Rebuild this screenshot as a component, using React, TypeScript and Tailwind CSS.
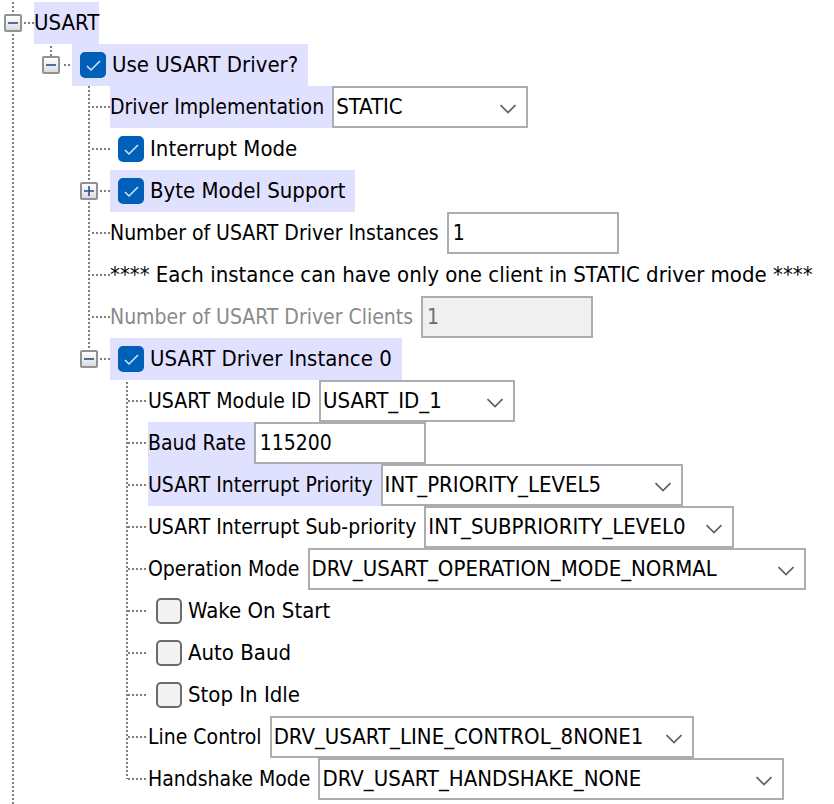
import { ReactNode } from 'react';

const LINE_V =
  'w-0.5 bg-fixed bg-[repeating-linear-gradient(to_bottom,transparent_0px,transparent_2px,#808080_2px,#808080_4px)]';
const LINE_H =
  'h-0.5 bg-fixed bg-[repeating-linear-gradient(to_right,#808080_0px,#808080_2px,transparent_2px,transparent_4px)]';

function Toggle({ open, name }: { open: boolean; name: string }) {
  return (
    <button
      type="button"
      aria-label={name}
      aria-expanded={open}
      className="flex size-[18px] shrink-0 items-center justify-center border-2 border-[#919191] bg-linear-to-b from-white to-[#dcdcdc] rounded-xs"
    >
      <svg viewBox="0 0 14 14" className="size-3.5 shrink-0" aria-hidden="true">
        <path d={open ? 'M2 7H12' : 'M2 7H12M7 2V12'} stroke="#2b4a9b" strokeWidth="1.6" fill="none" />
      </svg>
    </button>
  );
}

type Tail = 'through' | 'end';

function Branch({ tail, toggle }: { tail: Tail; toggle?: ReactNode }) {
  return (
    <div className="flex w-[34px] shrink-0 items-stretch">
      <div className="flex w-[26px] shrink-0 flex-col items-center">
        <div className={`flex-1 ${LINE_V}`} />
        {toggle}
        <div className={`flex-1 ${tail === 'end' ? 'w-0.5' : LINE_V}`} />
      </div>
      <div className={`flex-1 self-center ${toggle ? '-ml-0.5' : '-ml-3'} ${LINE_H}`} />
    </div>
  );
}

function Spacer({ line }: { line?: boolean }) {
  return (
    <div className="flex w-[38px] shrink-0">
      <div className="flex w-[26px] justify-center">{line && <div className={LINE_V} />}</div>
    </div>
  );
}

function Row({ depth, tail = 'through', toggle, children }: { depth: number; tail?: Tail; toggle?: ReactNode; children: ReactNode }) {
  return (
    <li className="flex h-[42px]">
      {depth > 0 && <Spacer line />}
      {depth > 1 && <Spacer />}
      {depth > 2 && <Spacer />}
      <Branch tail={tail} toggle={toggle} />
      {children}
    </li>
  );
}

function Check({ id, label, checked, lit }: { id: string; label: string; checked?: boolean; lit?: boolean }) {
  return (
    <div className={`flex items-center gap-1.5 pl-2 pr-2.5 ${lit ? 'bg-[#e0e0ff]' : ''}`}>
      <span className="grid">
        <input
          id={id}
          type="checkbox"
          defaultChecked={checked}
          className="peer col-start-1 row-start-1 size-[26px] appearance-none rounded-[5px] border-2 border-[#6b6b6b] bg-[#f3f3f3] checked:border-[#005fb8] checked:bg-[#005fb8]"
        />
        <svg viewBox="0 0 26 26" className="pointer-events-none col-start-1 row-start-1 hidden size-[26px] peer-checked:block" aria-hidden="true">
          <path d="M7 14L11 18L20 9" stroke="#d6e8f8" strokeWidth="1.5" fill="none" />
        </svg>
      </span>
      <label htmlFor={id}>{label}</label>
    </div>
  );
}

function FieldLabel({ id, label, lit, dim }: { id: string; label: string; lit?: boolean; dim?: boolean }) {
  return (
    <label htmlFor={id} className={`flex items-center pr-2 text-[21px] leading-9 ${lit ? 'bg-[#e0e0ff]' : ''} ${dim ? 'text-[#8a8a8a]' : ''}`}>
      {label}
    </label>
  );
}

function Text({ id, label, value, lit, disabled }: { id: string; label: string; value: string; lit?: boolean; disabled?: boolean }) {
  return (
    <>
      <FieldLabel id={id} label={label} lit={lit} dim={disabled} />
      <input
        id={id}
        type="text"
        defaultValue={value}
        disabled={disabled}
        className="w-[172px] border-2 border-[#abadb3] bg-white px-1 text-[21px] disabled:bg-[#f0f0f0] disabled:text-[#6d6d6d]"
      />
    </>
  );
}

function Choice({ id, label, value, width, lit }: { id: string; label: string; value: string; width: string; lit?: boolean }) {
  return (
    <>
      <FieldLabel id={id} label={label} lit={lit} />
      <span className={`grid ${width}`}>
        <select id={id} defaultValue={value} className="col-start-1 row-start-1 w-full appearance-none border-2 border-[#abadb3] bg-white px-0.5">
          <option>{value}</option>
        </select>
        <svg viewBox="0 0 16 10" className="pointer-events-none col-start-1 row-start-1 mt-1 mr-3 h-2.5 w-4 self-center justify-self-end" aria-hidden="true">
          <path d="M0.5 1L8 8.500L15.5 1" stroke="#606060" strokeWidth="1.7" fill="none" />
        </svg>
      </span>
    </>
  );
}

export default function App() {
  return (
    <main className="flex min-h-screen flex-col bg-white text-[22px] leading-9 whitespace-nowrap text-black [font-family:'DejaVu_Sans_Condensed','Noto_Sans',sans-serif]">
      <ul className="pt-0.5">
        <Row depth={0} toggle={<Toggle open name="USART" />}>
          <span className="flex items-center bg-[#e0e0ff]">USART</span>
        </Row>
        <Row depth={1} tail="end" toggle={<Toggle open name="Use USART Driver" />}>
          <Check id="driver" label="Use USART Driver?" checked lit />
        </Row>
        <Row depth={2}>
          <Choice id="impl" label="Driver Implementation" value="STATIC" width="w-[196px]" lit />
        </Row>
        <Row depth={2}>
          <Check id="interrupt" label="Interrupt Mode" checked />
        </Row>
        <Row depth={2} toggle={<Toggle open={false} name="Byte Model Support" />}>
          <Check id="byte" label="Byte Model Support" checked lit />
        </Row>
        <Row depth={2}>
          <Text id="instances" label="Number of USART Driver Instances" value="1" />
        </Row>
        <Row depth={2}>
          <span className="flex items-center">**** Each instance can have only one client in STATIC driver mode ****</span>
        </Row>
        <Row depth={2}>
          <Text id="clients" label="Number of USART Driver Clients" value="1" disabled />
        </Row>
        <Row depth={2} tail="end" toggle={<Toggle open name="USART Driver Instance 0" />}>
          <Check id="instance0" label="USART Driver Instance 0" checked lit />
        </Row>
        <Row depth={3}>
          <Choice id="module" label="USART Module ID" value="USART_ID_1" width="w-[196px]" />
        </Row>
        <Row depth={3}>
          <Text id="baud" label="Baud Rate" value="115200" lit />
        </Row>
        <Row depth={3}>
          <Choice id="priority" label="USART Interrupt Priority" value="INT_PRIORITY_LEVEL5" width="w-[302px]" lit />
        </Row>
        <Row depth={3}>
          <Choice id="subpriority" label="USART Interrupt Sub-priority" value="INT_SUBPRIORITY_LEVEL0" width="w-[310px]" />
        </Row>
        <Row depth={3}>
          <Choice id="operation" label="Operation Mode" value="DRV_USART_OPERATION_MODE_NORMAL" width="w-[498px]" />
        </Row>
        <Row depth={3}>
          <Check id="wake" label="Wake On Start" />
        </Row>
        <Row depth={3}>
          <Check id="autobaud" label="Auto Baud" />
        </Row>
        <Row depth={3}>
          <Check id="stopidle" label="Stop In Idle" />
        </Row>
        <Row depth={3}>
          <Choice id="line" label="Line Control" value="DRV_USART_LINE_CONTROL_8NONE1" width="w-[424px]" />
        </Row>
        <Row depth={3} tail="end">
          <Choice id="handshake" label="Handshake Mode" value="DRV_USART_HANDSHAKE_NONE" width="w-[466px]" />
        </Row>
      </ul>
      <div className="flex flex-1">
        <Spacer line />
      </div>
    </main>
  );
}
